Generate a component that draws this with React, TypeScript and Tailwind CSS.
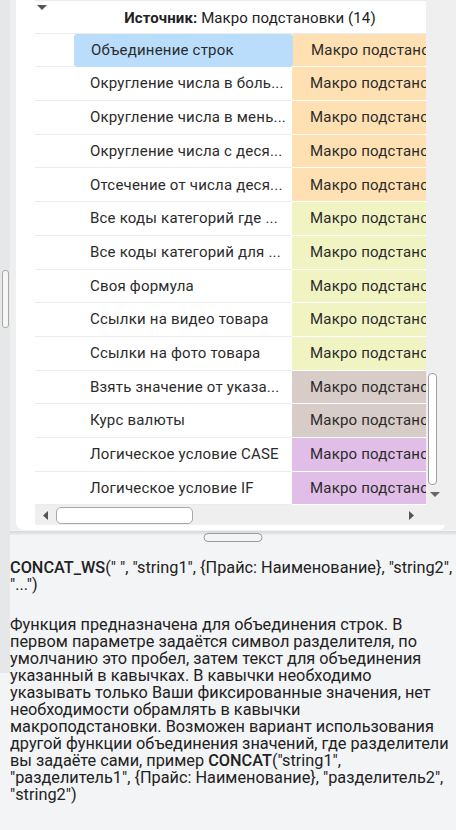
import React from 'react';

interface MacroRow {
  name: string;
  color: string;
}

// labels are shown as the grid cuts them
const rows: MacroRow[] = [
  { name: 'Объединение строк', color: 'bg-[#ffe0b2]' },
  { name: 'Округление числа в боль...', color: 'bg-[#ffe0b2]' },
  { name: 'Округление числа в мень...', color: 'bg-[#ffe0b2]' },
  { name: 'Округление числа с деся...', color: 'bg-[#ffe0b2]' },
  { name: 'Отсечение от числа деся...', color: 'bg-[#ffe0b2]' },
  { name: 'Все коды категорий где ...', color: 'bg-[#f0f4c3]' },
  { name: 'Все коды категорий для ...', color: 'bg-[#f0f4c3]' },
  { name: 'Своя формула', color: 'bg-[#f0f4c3]' },
  { name: 'Ссылки на видео товара', color: 'bg-[#f0f4c3]' },
  { name: 'Ссылки на фото товара', color: 'bg-[#f0f4c3]' },
  { name: 'Взять значение от указа...', color: 'bg-[#d7ccc8]' },
  { name: 'Курс валюты', color: 'bg-[#d7ccc8]' },
  { name: 'Логическое условие CASE', color: 'bg-[#e1bee7]' },
  { name: 'Логическое условие IF', color: 'bg-[#e1bee7]' },
];

export default function App() {
  const selected = 0;

  return (
    <div
      className="flex w-[456px] h-[830px] overflow-hidden bg-[#f3f4f6] text-[#222]"
      style={{ fontFamily: 'Roboto, "Noto Sans", sans-serif' }}
    >
      {/* page scrollbar */}
      <div className="w-[10px] shrink-0">
        <div className="h-[673px] bg-[#e6e7e9] pt-[270px] px-[2px]">
          <div className="h-[58px] w-[7px] rounded-[3px] border border-[#a8a8a8] bg-[#f6f6f6]" />
        </div>
      </div>

      <div className="flex-1 flex flex-col min-w-0">
        {/* macro grid area */}
        <div className="bg-[#efefef] pl-[6px] pr-[10px]">
          <div className="bg-white rounded-b-[8px] pl-[19px] pb-[5px]">
            <div className="flex">
              <div className="w-[391px] overflow-hidden">
                {/* group header */}
                <div className="flex h-[33.7px] border-t border-b border-[#ececec]">
                  <div className="w-[39px] shrink-0 pl-[2px] pt-[4px]">
                    <svg width="10" height="5" viewBox="0 0 10 5">
                      <path d="M0 0 L10 0 L5 5 Z" fill="#555" />
                    </svg>
                  </div>
                  <div className="flex-1 flex items-center justify-center pt-[2px] text-[15px] tracking-[0.1px] whitespace-nowrap">
                    <span className="font-bold">Источник:</span>
                    <span>&nbsp;Макро подстановки (14)</span>
                  </div>
                </div>

                {rows.map((row, i) => (
                  <div key={row.name} className="flex h-[33.7px] text-[15px] tracking-[0.2px] text-[#2b2b2b]">
                    <div className="w-[39px] shrink-0 border-b border-[#ececec]" />
                    {i === selected ? (
                      <div className="w-[219px] shrink-0 flex items-center pl-[17px] pr-[2px] bg-[#b9ddfb] rounded-[3px]">
                        <span className="whitespace-nowrap overflow-hidden">{row.name}</span>
                      </div>
                    ) : (
                      <div className="w-[218px] shrink-0 flex items-center pl-[16px] pr-[2px] border-b border-[#ececec]">
                        <span className="whitespace-nowrap overflow-hidden">{row.name}</span>
                      </div>
                    )}
                    <div
                      className={`flex-1 flex items-center pl-[18px] border-b border-white whitespace-nowrap overflow-hidden ${row.color}`}
                    >
                      Макро подстановки
                    </div>
                  </div>
                ))}
              </div>

              {/* vertical scrollbar */}
              <div className="w-[20px] shrink-0 bg-[#efefef] flex flex-col pt-[373px] pl-[2px]">
                <div className="h-[112px] w-[9px] rounded-[4px] border border-[#a0a0a0] bg-white" />
                <div className="mt-[7px] pl-[2px]">
                  <svg width="10" height="5" viewBox="0 0 10 5">
                    <path d="M0 0 L10 0 L5 5 Z" fill="#666" />
                  </svg>
                </div>
              </div>
            </div>

            {/* horizontal scrollbar */}
            <div className="h-[20px] bg-[#efefef] flex items-center">
              <div className="w-[21px] flex justify-center">
                <svg width="5" height="9" viewBox="0 0 5 9">
                  <path d="M5 0 L5 9 L0 4.5 Z" fill="#555" />
                </svg>
              </div>
              <div className="h-[17px] w-[137px] rounded-[5px] border border-[#a8a8a8] bg-white" />
              <div className="ml-[216px]">
                <svg width="5" height="9" viewBox="0 0 5 9">
                  <path d="M0 0 L0 9 L5 4.5 Z" fill="#555" />
                </svg>
              </div>
            </div>
          </div>
        </div>

        {/* splitter */}
        <div className="relative h-[12px] pt-[1px]">
          <div className="h-[4px] bg-gradient-to-b from-[#d6d7d9] to-[#eceef0]" />
          <div className="absolute left-1/2 top-[3px] -translate-x-1/2 h-[9px] w-[59px] rounded-full border border-[#9a9a9a] bg-[#f3f4f6]" />
        </div>

        {/* description */}
        <div className="pt-[17px] text-[16.3px] leading-[17.1px]">
          <p>
            <span className="font-medium">CONCAT_WS</span>(" ", "string1", {'{'}Прайс: Наименование{'}'}, "string2", "...")
          </p>
          <p className="mt-[22px]">
            Функция предназначена для объединения строк. В первом параметре задаётся символ разделителя, по умолчанию это пробел, затем текст для объединения указанный в кавычках. В кавычки необходимо указывать только Ваши фиксированные значения, нет необходимости обрамлять в кавычки макроподстановки. Возможен вариант использования другой функции объединения значений, где разделители вы задаёте сами, пример{' '}
            <span className="font-medium">CONCAT</span>("string1", "разделитель1", {'{'}Прайс: Наименование{'}'}, "разделитель2", "string2")
          </p>
        </div>
      </div>
    </div>
  );
}
